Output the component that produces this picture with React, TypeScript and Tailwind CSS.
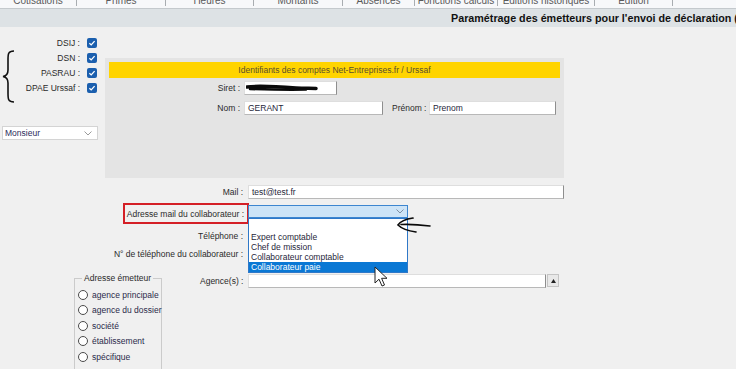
import React from "react";

function Check() {
  return (
    <span className="w-[10px] h-[10px] rounded-[2px] bg-[#1b5fae] flex items-center justify-center shrink-0">
      <svg width="8" height="8" viewBox="0 0 8 8">
        <path d="M1.4 4.2 L3.2 5.9 L6.6 2.1" stroke="white" strokeWidth="1.3" fill="none" />
      </svg>
    </span>
  );
}

function Chevron({ color = "#8a8a8a" }: { color?: string }) {
  return (
    <svg width="8" height="5" viewBox="0 0 8 5">
      <path d="M0.5 0.5 L4 4 L7.5 0.5" stroke={color} strokeWidth="1" fill="none" />
    </svg>
  );
}

const inputCls =
  "h-[14px] bg-white border border-[#dedede] border-r-[#8e8e8e] border-b-[#b8b8b8] text-[8.5px] leading-[12px] pl-[3px] text-[#1f1f3a] shrink-0";

const tabs: { label: string; cls: string }[] = [
  { label: "Cotisations", cls: "w-[77px]" },
  { label: "Primes", cls: "w-[89px]" },
  { label: "Heures", cls: "w-[88px]" },
  { label: "Montants", cls: "w-[89px]" },
  { label: "Absences", cls: "w-[72px]" },
  { label: "Fonctions calculs", cls: "w-[83px]" },
  { label: "Editions historiques", cls: "w-[97px]" },
  { label: "Edition", cls: "w-[78px]" },
];

const checks = ["DSIJ :", "DSN :", "PASRAU :", "DPAE Urssaf :"];
const radios = ["agence principale", "agence du dossier", "société", "établissement", "spécifique"];

export default function App() {
  return (
    <div className="w-[736px] h-[369px] overflow-hidden bg-[#f0f0f0] relative font-['Liberation_Sans',Arial,sans-serif] text-[#2a2a2a]">
      {/* Tabs */}
      <div className="h-[9px] bg-[#f7f8fa] border-b border-[#c4c9cd] flex overflow-hidden">
        {tabs.map((t) => (
          <div key={t.label} className={`${t.cls} flex shrink-0`}>
            <div className="flex-1 text-center text-[10px] leading-[10px] -mt-[4px] text-[#5a5a5a] whitespace-nowrap">
              {t.label}
            </div>
            <div className="w-px h-[6px] bg-[#a9adb1]" />
          </div>
        ))}
      </div>

      {/* Title bar */}
      <div className="h-[18px] bg-[#dde2e5] flex items-center overflow-hidden">
        <div className="pl-[451px] whitespace-nowrap font-bold text-[10.75px] leading-[12px] text-[#111]">
          Paramétrage des émetteurs pour l'envoi de déclaration (DSN)
        </div>
      </div>

      {/* Body */}
      <div className="flex">
        {/* Left column */}
        <div className="w-[105px] shrink-0">
          <div className="flex">
            <svg className="mt-[23px] ml-[2px] shrink-0" width="13" height="53" viewBox="0 0 13 53">
              <path
                d="M12 1 C6 1 6 4 6 10 L6 20 C6 24 4 26 1 26.5 C4 27 6 29 6 33 L6 43 C6 49 6 52 12 52"
                stroke="#111"
                strokeWidth="1.6"
                fill="none"
              />
            </svg>
            <div className="flex-1 pt-[8px] pr-[8px]">
              {checks.map((c) => (
                <div key={c} className="h-[15px] flex items-center justify-end gap-[7px]">
                  <span className="text-[8.5px] leading-[10px]">{c}</span>
                  <Check />
                </div>
              ))}
            </div>
          </div>
          <div className="mt-[23px] ml-[2px] w-[96px] h-[14px] bg-white border border-[#d4d4d4] flex items-center justify-between pl-[2px] pr-[5px]">
            <span className="text-[8.5px] leading-[10px] text-[#2a2a5a]">Monsieur</span>
            <Chevron color="#9a9a9a" />
          </div>
        </div>

        {/* Gray panel */}
        <div className="mt-[31px] w-[459px] h-[120px] bg-[#e4e4e4] pt-[4px] shrink-0">
          <div className="mx-[4px] h-[16px] bg-[#ffd400] flex items-center justify-center text-[8.5px] text-[#5a4f2e]">
            Identifiants des comptes Net-Entreprises.fr / Urssaf
          </div>
          <div className="flex items-center mt-[3px]">
            <div className="w-[135px] text-right text-[8.5px] leading-[10px]">Siret :</div>
            <div className={`${inputCls} ml-[4px] w-[93px] flex items-center`}>
              <svg width="72" height="8" viewBox="0 0 72 8" className="-ml-[2px]">
                <path d="M1 3 C12 1.5 30 2.5 50 4 C58 4.6 64 4.2 70 4.5" stroke="#0a0a0a" strokeWidth="3.5" fill="none" strokeLinecap="round" />
                <path d="M4 5 C20 5.5 40 6 60 5.6" stroke="#0a0a0a" strokeWidth="2.5" fill="none" strokeLinecap="round" />
              </svg>
            </div>
          </div>
          <div className="flex items-center mt-[6px]">
            <div className="w-[135px] text-right text-[8.5px] leading-[10px]">Nom :</div>
            <div className={`${inputCls} ml-[4px] w-[139px]`}>GERANT</div>
            <div className="ml-[9px] w-[35px] text-[8.5px] leading-[10px] whitespace-nowrap">Prénom :</div>
            <div className={`${inputCls} ml-[2px] w-[127px]`}>Prenom</div>
          </div>
        </div>
      </div>

      {/* Mail */}
      <div className="flex items-center mt-[7px]">
        <div className="w-[243px] text-right text-[8.5px] leading-[10px]">Mail :</div>
        <div className={`${inputCls} ml-[5px] w-[316px]`}>test@test.fr</div>
      </div>

      {/* Adresse mail du collaborateur */}
      <div className="flex items-start mt-[4px]">
        <div className="ml-[123px] w-[126px] h-[21px] border-2 border-[#d41f26] flex items-center justify-end pr-[3px] shrink-0">
          <span className="text-[8.5px] leading-[10px] whitespace-nowrap">Adresse mail du collaborateur :</span>
        </div>
        <div className="-ml-[1px] mt-[2px] w-[160px] h-[13px] bg-[#cde4f7] border border-[#3d86d0] flex items-center justify-end pr-[3px] shrink-0">
          <Chevron color="#7d8fa3" />
        </div>
      </div>

      {/* Téléphone */}
      <div className="flex mt-[7px]">
        <div className="w-[243px] text-right text-[8.5px] leading-[10px]">Téléphone :</div>
      </div>
      <div className="flex mt-[8px]">
        <div className="w-[243px] text-right text-[8.5px] leading-[10px] whitespace-nowrap">N° de téléphone du collaborateur :</div>
      </div>

      {/* Bottom row */}
      <div className="flex items-start mt-[14px]">
        <fieldset className="ml-[74px] w-[88px] h-[110px] border border-[#cbcbcb] shrink-0 pl-[3px]">
          <legend className="ml-[4px] px-[2px] text-[8.5px] leading-[10px]">Adresse émetteur</legend>
          <div className="pt-[4px]">
            {radios.map((r) => (
              <div key={r} className="h-[15.5px] flex items-center gap-[4px]">
                <span className="w-[10px] h-[10px] rounded-full border border-[#4a4a4a] bg-white shrink-0" />
                <span className="text-[8.5px] leading-[10px] text-[#2a2a4a] whitespace-nowrap">{r}</span>
              </div>
            ))}
          </div>
        </fieldset>
        <div className="w-[81px] mt-[3px] text-right text-[8.5px] leading-[10px] shrink-0">Agence(s) :</div>
        <div className={`${inputCls} ml-[5px] mt-[1px] w-[298px]`} />
        <div className="ml-[1px] mt-[1px] w-[12px] h-[13px] bg-[#e8e8e8] border border-[#c4c4c4] flex items-center justify-center shrink-0">
          <svg width="5" height="4" viewBox="0 0 5 4">
            <path d="M2.5 0 L5 4 L0 4 Z" fill="#222" />
          </svg>
        </div>
      </div>

      {/* Dropdown list overlay */}
      <div className="absolute left-[248px] top-[218px] w-[160px] h-[55px] bg-white border border-[#2f78c8]">
        <div className="h-[13px]" />
        {["Expert comptable", "Chef de mission", "Collaborateur comptable"].map((i) => (
          <div key={i} className="h-[10px] leading-[10px] pl-[2px] text-[8.5px] text-[#1f1f3a] whitespace-nowrap">
            {i}
          </div>
        ))}
        <div className="h-[10px] leading-[10px] pl-[2px] text-[8.5px] bg-[#0a78d4] text-white whitespace-nowrap">
          Collaborateur paie
        </div>
      </div>

      {/* Hand-drawn arrow */}
      <svg className="absolute left-[394px] top-[214px]" width="40" height="22" viewBox="394 214 40 22">
        <path d="M413 218 C406 219 400 222 398 225 C402 229 409 231 416 232" stroke="#0a0a0a" strokeWidth="1.7" fill="none" strokeLinecap="round" />
        <path d="M401 224.5 C412 224 422 225 430 226" stroke="#0a0a0a" strokeWidth="1.6" fill="none" strokeLinecap="round" />
      </svg>

      {/* Mouse cursor */}
      <svg className="absolute left-[374px] top-[266px]" width="14" height="22" viewBox="0 0 14 22">
        <path d="M1 1 L1 17 L5 13.2 L8 20 L10.5 19 L7.6 12.3 L13 12.3 Z" fill="white" stroke="#222" strokeWidth="1" strokeLinejoin="round" />
      </svg>
    </div>
  );
}
